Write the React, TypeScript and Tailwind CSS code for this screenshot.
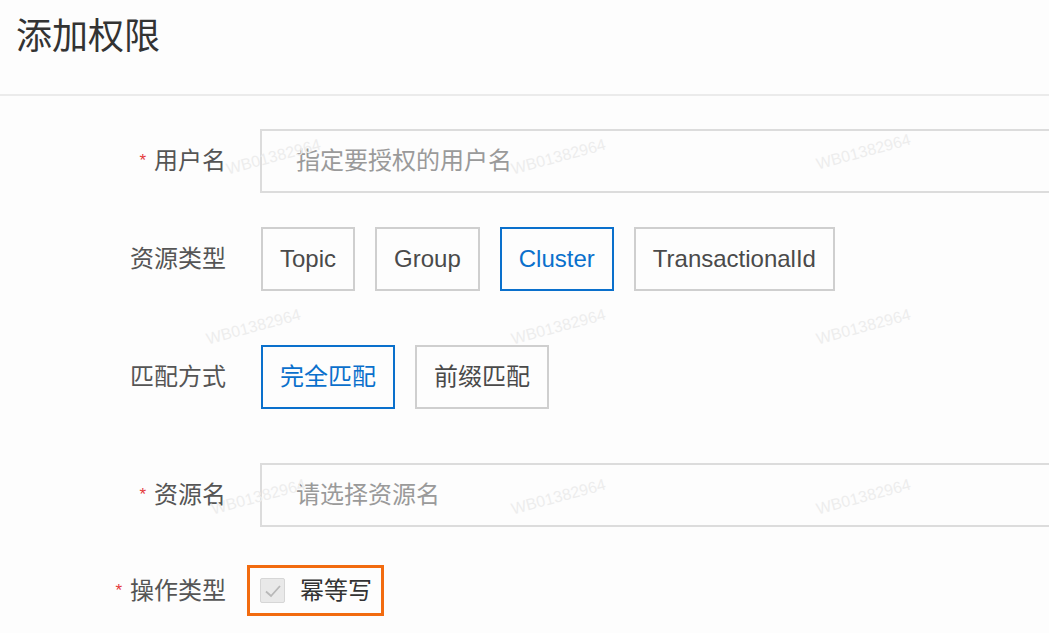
import React from "react";

const font = { fontFamily: '"Liberation Sans", "Noto Sans CJK SC", sans-serif' };

const marks = [
  [225, 145], [510, 145], [815, 140],
  [205, 315], [510, 315], [815, 315],
  [210, 485], [510, 485], [815, 485],
];

function Label({ text, required }: { text: string; required?: boolean }) {
  return (
    <div className="flex w-[228px] shrink-0 items-center justify-end pr-[2px] text-[24px] text-[#555]">
      {required && <span className="mr-[8px] text-[17px] text-[#e4393c]">*</span>}
      {text}
    </div>
  );
}

function Choice({ text, active }: { text: string; active?: boolean }) {
  return (
    <div
      className={
        "flex h-[64px] items-center border-2 px-[17px] text-[24px] " +
        (active ? "border-[#0a70cc] text-[#0a70cc]" : "border-[#cfcfcf] text-[#4a4a4a]")
      }
    >
      {text}
    </div>
  );
}

export default function App() {
  return (
    <div className="relative h-[633px] w-[1049px] overflow-hidden bg-[#fdfdfd]" style={font}>
      <div className="h-[96px] border-b-2 border-[#ebebeb] pl-[16px] pt-[10px] text-[36px] text-[#333]">添加权限</div>

      <div className="pt-[33px]">
        <div className="flex items-center">
          <Label text="用户名" required />
          <div className="ml-[32px] flex h-[64px] flex-1 items-center border-2 border-r-0 border-[#dcdcdc] pl-[34px] text-[24px] text-[#9a9a9a]">
            指定要授权的用户名
          </div>
        </div>

        <div className="mt-[34px] flex items-center">
          <Label text="资源类型" />
          <div className="ml-[33px] flex gap-[20px]">
            <Choice text="Topic" />
            <Choice text="Group" />
            <Choice text="Cluster" active />
            <Choice text="TransactionalId" />
          </div>
        </div>

        <div className="mt-[54px] flex items-center">
          <Label text="匹配方式" />
          <div className="ml-[33px] flex gap-[20px]">
            <Choice text="完全匹配" active />
            <Choice text="前缀匹配" />
          </div>
        </div>

        <div className="mt-[54px] flex items-center">
          <Label text="资源名" required />
          <div className="ml-[32px] flex h-[64px] flex-1 items-center border-2 border-r-0 border-[#dcdcdc] pl-[34px] text-[24px] text-[#9a9a9a]">
            请选择资源名
          </div>
        </div>

        <div className="mt-[38px] flex items-center">
          <Label text="操作类型" required />
          <div className="ml-[19px] flex h-[51px] items-center border-[3px] border-[#f26b0f] pl-[10px] pr-[9px]">
            <div className="flex h-[25px] w-[25px] items-center justify-center rounded-[2px] border border-[#d6d6d6] bg-[#e9e9e9]">
              <svg width="20" height="20" viewBox="0 0 20 20" fill="none">
                <path d="M3 10.5 L8 15 L17 5" stroke="#b8b8b8" strokeWidth="1.8" />
              </svg>
            </div>
            <span className="ml-[15px] text-[24px] text-[#333]">幂等写</span>
          </div>
        </div>
      </div>

      {marks.map(([x, y], i) => (
        <div
          key={i}
          className="pointer-events-none absolute -rotate-[15deg] text-[16px] text-[#ededed]"
          style={{ left: x, top: y }}
        >
          WB01382964
        </div>
      ))}
    </div>
  );
}
